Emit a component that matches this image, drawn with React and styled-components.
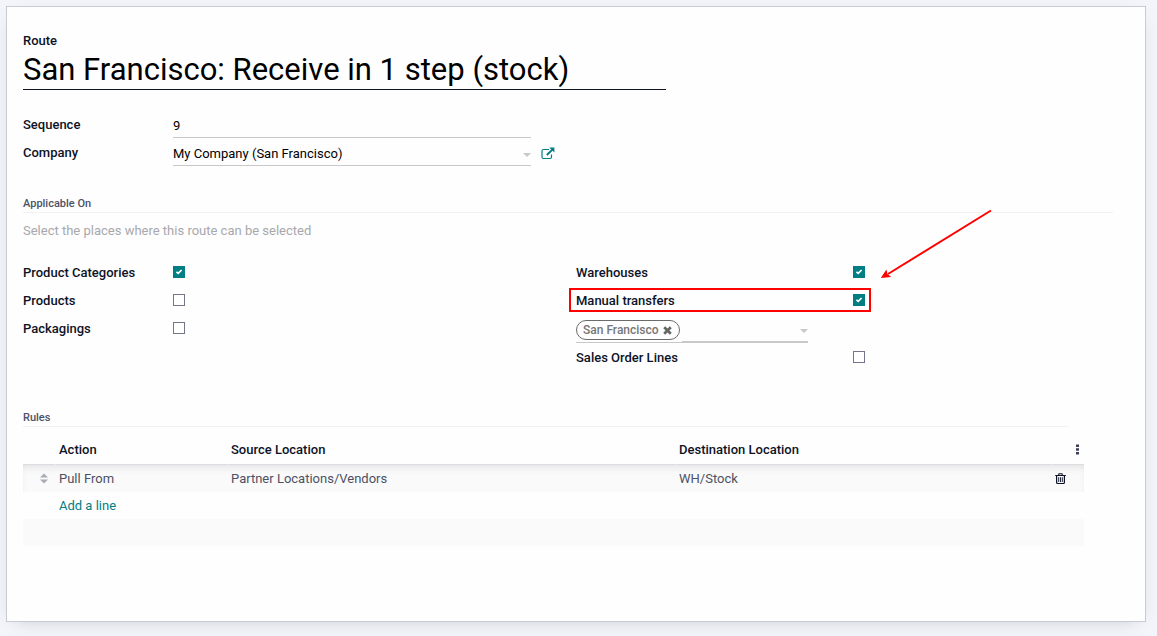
import React from "react";
import styled, { createGlobalStyle, css } from "styled-components";

const GlobalStyle = createGlobalStyle`
  *, *::before, *::after { box-sizing: border-box; }
  body {
    margin: 0;
    background: #f4f5fa;
    color: #0d1226;
    font: 400 13px/20px Roboto, "Liberation Sans", sans-serif;
  }
  input, select, button { font: inherit; color: inherit; }
`;

const Page = styled.main`
  padding: 6px 11px 14px 6px;
`;

const Sheet = styled.form`
  background: #fefefe;
  border: 1px solid #c8cbd1;
  box-shadow: 0 5px 20px -10px rgba(0, 0, 0, 0.25);
  padding: 25px 16px 75px;
`;

const Label = styled.label`
  font-weight: 500;
  line-height: 22px;
  color: #0d1226;
`;

const TitleBlock = styled.div`
  display: flex;
  flex-direction: column;
  width: 60%;
  max-width: 643px;
  margin-bottom: 22px;
  ${Label} { line-height: 18px; }
`;

const TitleInput = styled.input`
  height: 40px;
  padding: 0;
  border: 0;
  border-bottom: 1px solid #0d1226;
  background: transparent;
  outline: 0;
  font-size: 31px;
  color: #000;
`;

const Columns = styled.div`
  display: grid;
  grid-template-columns: 1fr 1fr;
`;

const Column = styled.div`
  position: relative;
`;

const FieldRow = styled.div`
  display: grid;
  grid-template-columns: 150px 1fr 45px;
  height: 28px;
  padding: 2px 0;
`;

const underline = css`
  width: 100%;
  height: 24px;
  padding: 0;
  border: 0;
  border-bottom: 1px solid #c8c8c8;
  border-radius: 0;
  background: transparent;
  outline: 0;
  color: #000;
`;

const TextInput = styled.input`
  ${underline}
`;

const SelectWrap = styled.div`
  position: relative;
`;

const Select = styled.select`
  ${underline}
  appearance: none;
`;

const Caret = styled.span`
  position: absolute;
  right: 0;
  top: 11px;
  border: 4px solid transparent;
  border-top-color: #c8c8c8;
  border-bottom: 0;
  pointer-events: none;
`;

const IconButton = styled.button`
  display: inline-flex;
  align-items: center;
  justify-content: center;
  padding: 0;
  border: 0;
  background: transparent;
  color: ${(p) => p.$color || "inherit"};
  cursor: pointer;
  svg { display: block; }
`;

const OpenButton = styled(IconButton)`
  justify-self: start;
  height: 22px;
  margin-left: 10px;
`;

const SectionTitle = styled.h2`
  margin: ${(p) => p.$top}px ${(p) => p.$right}px 0 0;
  border-bottom: 1px solid #f1f1f3;
  font-size: 11px;
  line-height: 16px;
  font-weight: 500;
  color: #4c5166;
`;

const Hint = styled.p`
  margin: 8px 0 17px;
  color: #a8a8ac;
`;

const CheckRow = styled.div`
  position: relative;
  display: grid;
  grid-template-columns: ${(p) => (p.$wide ? 277 : 150)}px 12px;
  align-items: center;
  width: max-content;
  height: 28px;
  ${Label} { padding-top: 2px; }
  ${(p) =>
    p.$highlight &&
    css`
      &::after {
        content: "";
        position: absolute;
        inset: 2px -6px 2px -7px;
        border: 2px solid #ff0000;
        pointer-events: none;
      }
    `}
`;

const CheckBox = styled.span`
  position: relative;
  display: block;
  width: 12px;
  height: 12px;
  svg {
    position: absolute;
    inset: 0;
    visibility: hidden;
    pointer-events: none;
  }
  input {
    appearance: none;
    display: block;
    width: 12px;
    height: 12px;
    margin: 0;
    border: 1px solid #73768a;
    background: #fff;
  }
  input:checked {
    border-color: #017e84;
    background: #017e84;
  }
  input:checked + svg { visibility: visible; }
`;

const TagField = styled.div`
  position: relative;
  display: flex;
  align-items: flex-start;
  gap: 2px;
  width: 232px;
  height: 29px;
  padding-top: 6px;
  border-bottom: 1px solid #c8c8c8;
  ${Caret} { top: 15px; }
`;

const Tag = styled.span`
  display: flex;
  align-items: center;
  gap: 4px;
  height: 20px;
  padding: 0 7px 0 6px;
  border: 1px solid #6b6b6b;
  border-radius: 10px;
  font-size: 12px;
  line-height: 18px;
  font-weight: 500;
  color: #777;
  white-space: nowrap;
`;

const TagInput = styled.input`
  flex: 1;
  min-width: 0;
  height: 22px;
  padding: 0;
  border: 0;
  border-bottom: 1px solid #c8c8c8;
  background: transparent;
  outline: 0;
`;

const Arrow = styled.svg`
  position: absolute;
  left: 304px;
  top: -50px;
  pointer-events: none;
`;

const RulesTable = styled.table`
  width: calc(100% - 45px);
  margin-top: 10px;
  table-layout: fixed;
  border-collapse: separate;
  border-spacing: 0;
  color: #4c5166;

  th, td {
    height: 27px;
    padding: 0 5px 0 4px;
    text-align: left;
    vertical-align: middle;
  }
  th {
    height: 28px;
    padding-bottom: 2px;
    border-bottom: 1px solid #dcdde2;
    font-weight: 500;
    color: #0d1226;
  }
  th + th {
    padding-left: 3px;
    border-left: 1px solid #fefefe;
  }
`;

const Row = styled.tr`
  background: ${(p) => (p.$striped ? "#fafafa" : "transparent")};
  box-shadow: ${(p) => (p.$first ? "inset 0 5px 10px -4px rgba(0, 0, 0, 0.12)" : "none")};
`;

const HandleCell = styled.td`
  svg { display: block; margin-left: 13px; }
`;

const AddLink = styled.a`
  color: #017e84;
  text-decoration: none;
`;

const Col = styled.col`
  width: ${(p) => p.$w};
`;

const ActionBox = styled.div`
  display: flex;
  justify-content: flex-end;
`;

function Check({ id, label, checked, wide, highlight }) {
  return (
    <CheckRow $wide={wide} $highlight={highlight}>
      <Label htmlFor={id}>{label}</Label>
      <CheckBox>
        <input id={id} type="checkbox" defaultChecked={checked} />
        <svg width="12" height="12" viewBox="0 0 12 12" fill="none" stroke="#fff" strokeWidth="1.7">
          <path d="M3.4 5.8 L5.2 7.4 L8.6 4" />
        </svg>
      </CheckBox>
    </CheckRow>
  );
}

const ExternalIcon = () => (
  <svg width="14" height="13" viewBox="0 0 14 13" fill="none" stroke="currentColor">
    <path d="M8 2.5H2.5A1.5 1.5 0 0 0 1 4v6a1.5 1.5 0 0 0 1.5 1.5h6.5a1.5 1.5 0 0 0 1.5-1.5V7.5" strokeWidth="1.2" />
    <path d="M5.8 8 L11.4 2.6" strokeWidth="2" />
    <path d="M8.2 .5H13.4V5.6Z" fill="currentColor" stroke="none" />
  </svg>
);

const TrashIcon = () => (
  <svg width="11" height="12" viewBox="0 0 11 12" fill="none" stroke="currentColor">
    <path d="M.2 2.5H10.8M3.5 2.3L4 .8H7L7.5 2.3" strokeWidth="1.1" />
    <path d="M1.6 2.6V9.6Q1.6 10.5 2.6 10.5H8.4Q9.4 10.5 9.4 9.6V2.6" strokeWidth="1.2" />
    <path d="M3.7 4.2V9M5.5 4.2V9M7.3 4.2V9" strokeWidth=".9" />
  </svg>
);

const TimesIcon = () => (
  <svg width="9" height="9" viewBox="0 0 9 9" stroke="#666" strokeWidth="2.7">
    <path d="M1.2 1.2L7.8 7.8M7.8 1.2L1.2 7.8" />
  </svg>
);

const SortIcon = () => (
  <svg width="8" height="11" viewBox="0 0 8 11" fill="#a9adb3">
    <path d="M0 4.6L4 .4L8 4.6ZM0 6.4H8L4 10.6Z" />
  </svg>
);

const DotsIcon = () => (
  <svg width="3" height="11" viewBox="0 0 3 11" fill="#3c3f55">
    <path d="M0 .5H3V3H0ZM0 4.2H3V6.8H0ZM0 8H3V10.5H0Z" />
  </svg>
);

const HeadButton = styled(IconButton)`
  height: 20px;
`;

const TrashButton = styled(IconButton)`
  height: 20px;
  margin-right: 13px;
`;

export default function App() {
  return (
    <Page>
      <GlobalStyle />
      <Sheet onSubmit={(e) => e.preventDefault()}>
        <TitleBlock>
          <Label htmlFor="route">Route</Label>
          <TitleInput id="route" defaultValue="San Francisco: Receive in 1 step (stock)" />
        </TitleBlock>

        <Columns>
          <Column>
            <FieldRow>
              <Label htmlFor="sequence">Sequence</Label>
              <TextInput id="sequence" defaultValue="9" />
            </FieldRow>
            <FieldRow>
              <Label htmlFor="company">Company</Label>
              <SelectWrap>
                <Select id="company">
                  <option>My Company (San Francisco)</option>
                </Select>
                <Caret />
              </SelectWrap>
              <OpenButton type="button" $color="#017e84" aria-label="External link">
                <ExternalIcon />
              </OpenButton>
            </FieldRow>
          </Column>
        </Columns>

        <SectionTitle $top={28} $right={16}>Applicable On</SectionTitle>
        <Hint>Select the places where this route can be selected</Hint>

        <Columns>
          <Column>
            <Check id="categories" label="Product Categories" checked />
            <Check id="products" label="Products" />
            <Check id="packagings" label="Packagings" />
          </Column>
          <Column>
            <Check id="warehouses" label="Warehouses" checked wide />
            <Check id="manual" label="Manual transfers" checked wide highlight />
            <TagField>
              <Tag>
                San Francisco
                <IconButton type="button" aria-label="Delete">
                  <TimesIcon />
                </IconButton>
              </Tag>
              <TagInput aria-label="Warehouse tags" />
              <Caret />
            </TagField>
            <Check id="sales" label="Sales Order Lines" wide />
            <Arrow width="114" height="72" viewBox="0 0 114 72">
              <path d="M111 2.5L8 66" stroke="#ff0000" strokeWidth="2" fill="none" />
              <path d="M.8 70L6.4 61.6L7.4 66L11.2 69Z" fill="#ff0000" />
            </Arrow>
          </Column>
        </Columns>

        <SectionTitle $top={39} $right={61}>Rules</SectionTitle>
        <RulesTable>
          <colgroup>
            <Col $w="32px" />
            <Col $w="172px" />
            <Col $w="448px" />
            <Col $w="auto" />
            <Col $w="33px" />
          </colgroup>
          <thead>
            <tr>
              <th aria-label="Order" />
              <th>Action</th>
              <th>Source Location</th>
              <th>Destination Location</th>
              <th>
                <ActionBox>
                  <HeadButton type="button" aria-label="Optional columns">
                    <DotsIcon />
                  </HeadButton>
                </ActionBox>
              </th>
            </tr>
          </thead>
          <tbody>
            <Row $striped $first>
              <HandleCell><SortIcon /></HandleCell>
              <td>Pull From</td>
              <td>Partner Locations/Vendors</td>
              <td>WH/Stock</td>
              <td>
                <ActionBox>
                  <TrashButton type="button" $color="#0d1226" aria-label="Delete row">
                    <TrashIcon />
                  </TrashButton>
                </ActionBox>
              </td>
            </Row>
            <Row>
              <td />
              <td colSpan={4}><AddLink href="#add">Add a line</AddLink></td>
            </Row>
            <Row $striped>
              <td colSpan={5} />
            </Row>
          </tbody>
        </RulesTable>
      </Sheet>
    </Page>
  );
}
